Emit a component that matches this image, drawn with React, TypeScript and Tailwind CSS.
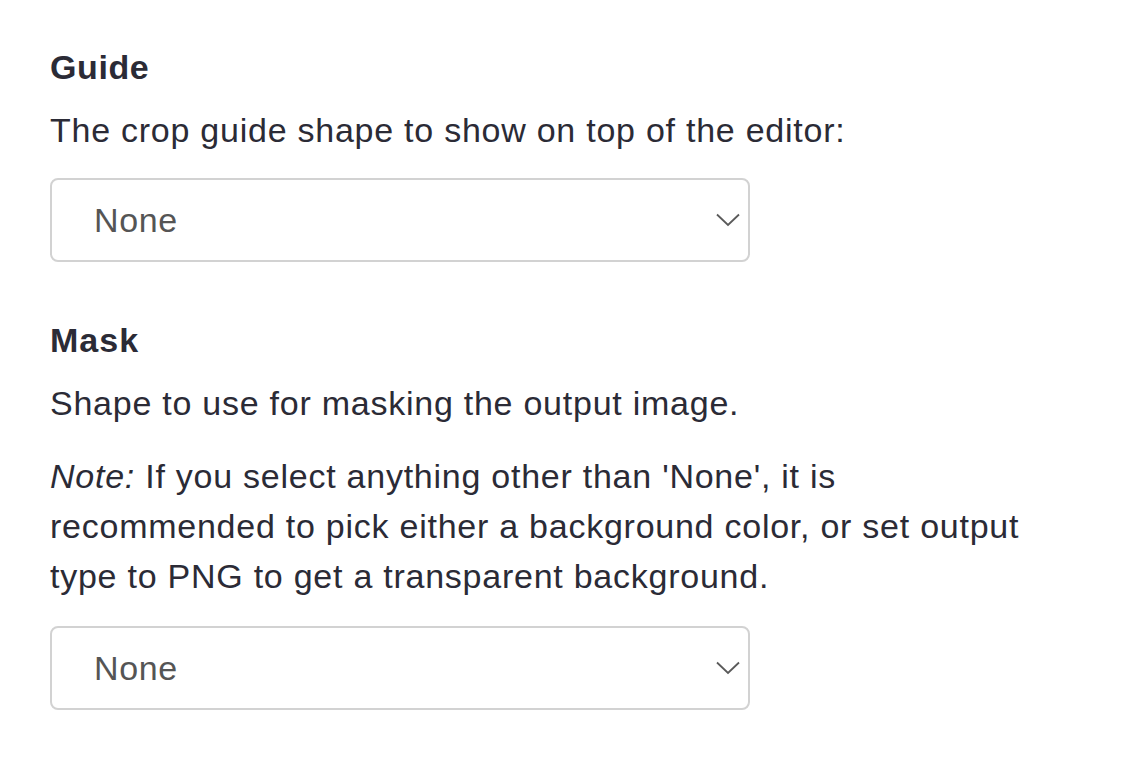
import React from 'react'

const SelectBox: React.FC<{ value: string }> = ({ value }) => {
  return (
    <div className="relative w-[700px] h-[84px]">
      <select
        defaultValue={value}
        className="appearance-none w-full h-full rounded-[8px] border-2 border-[#d2d2d2] bg-white pl-[42px] pr-12 text-[34px] tracking-[0.6px] text-[#555555] outline-none"
        style={{ fontFamily: '"Liberation Sans", Arial, sans-serif' }}
      >
        <option>{value}</option>
      </select>
      <svg
        className="pointer-events-none absolute right-[10px] top-[35px]"
        width="24"
        height="14"
        viewBox="0 0 24 14"
        fill="none"
      >
        <path d="M1 1.5 L12 12 L23 1.5" stroke="#5a5a5a" strokeWidth="1.8" />
      </svg>
    </div>
  )
}

export default function App() {
  return (
    <div
      className="min-h-screen bg-white pl-[50px] pt-[42px] text-[34px] leading-[50px] text-[#2b2b36]"
      style={{ fontFamily: '"Liberation Sans", Arial, sans-serif' }}
    >
      {/* Guide */}
      <h3 className="font-bold tracking-[0.6px] mb-[13px]">Guide</h3>
      <p className="tracking-[0.75px] mb-[23px]">The crop guide shape to show on top of the editor:</p>
      <SelectBox value="None" />

      {/* Mask */}
      <h3 className="font-bold tracking-[1px] mt-[53px] mb-[13px]">Mask</h3>
      <p className="tracking-[0.75px] mb-[23px]">Shape to use for masking the output image.</p>
      <p className="tracking-[0.75px] mb-[25px]">
        <em>Note:</em> If you select anything other than 'None', it is
        <br />
        recommended to pick either a background color, or set output
        <br />
        type to PNG to get a transparent background.
      </p>
      <SelectBox value="None" />
    </div>
  )
}
